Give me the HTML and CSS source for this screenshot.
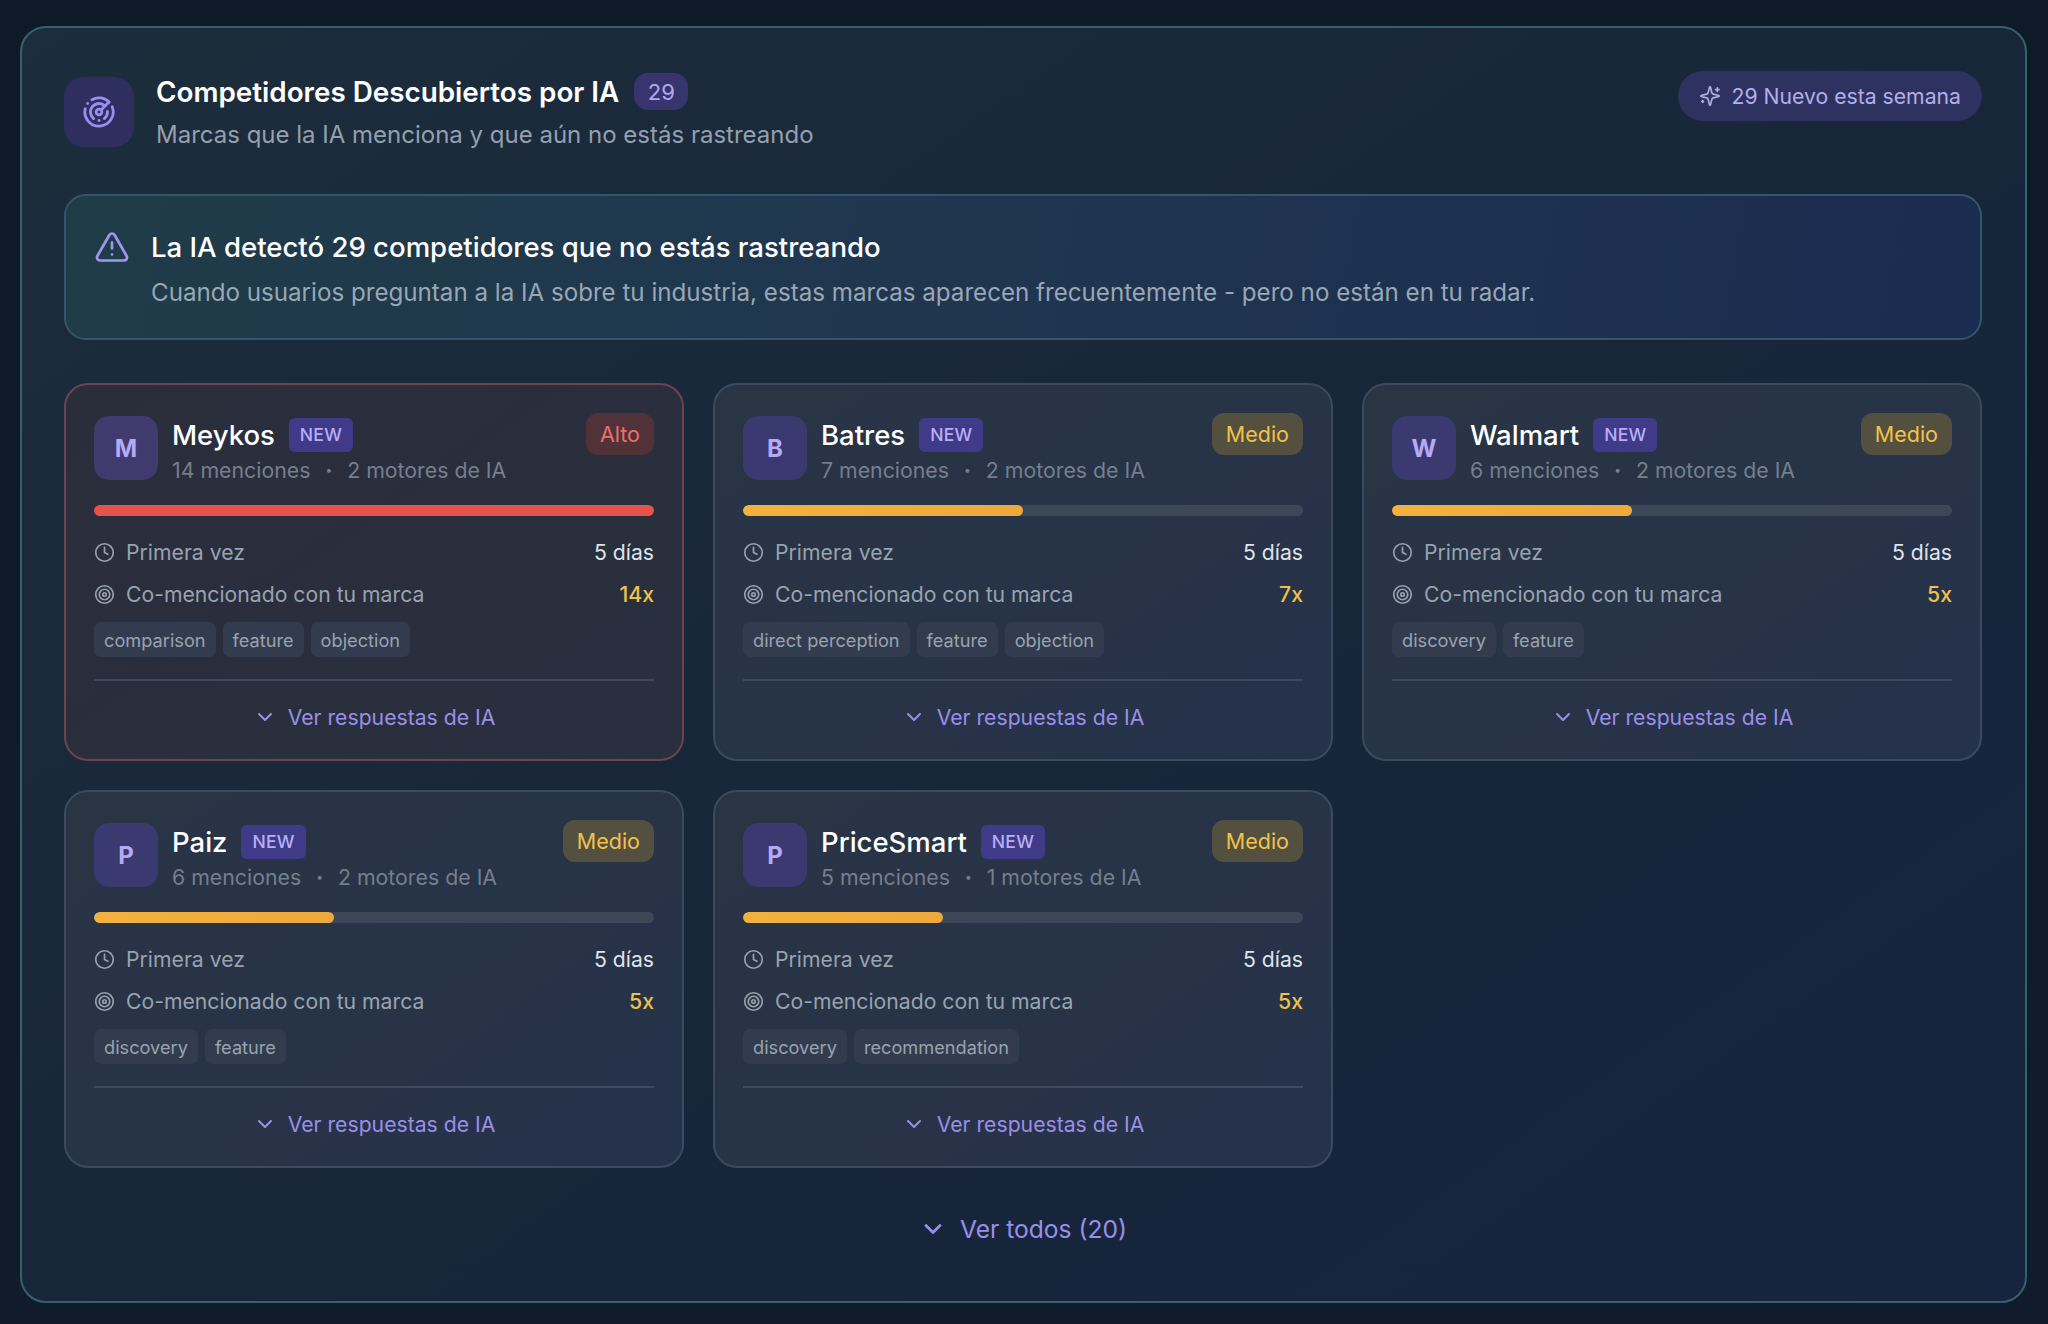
FILE: index.html
```html
<!DOCTYPE html>
<html lang="es">
<head>
<meta charset="utf-8">
<title>Competidores Descubiertos por IA</title>
<link rel="stylesheet" href="styles.css">
</head>
<body>
<svg class="defs" width="0" height="0" aria-hidden="true">
  <symbol id="i-radar" viewBox="0 0 24 24"><path d="M19.07 4.93A10 10 0 0 0 6.99 3.34"/><path d="M4 6h.01"/><path d="M2.29 9.62A10 10 0 1 0 21.31 8.35"/><path d="M16.24 7.76A6 6 0 1 0 8.23 16.67"/><path d="M12 18h.01"/><path d="M17.99 11.66A6 6 0 0 1 15.77 16.67"/><circle cx="12" cy="12" r="2"/><path d="m13.41 10.59 5.66-5.66"/></symbol>
  <symbol id="i-alert" viewBox="0 0 24 24"><path d="m21.73 18-8-14a2 2 0 0 0-3.48 0l-8 14A2 2 0 0 0 4 21h16a2 2 0 0 0 1.73-3"/><path d="M12 9v4"/><path d="M12 17h.01"/></symbol>
  <symbol id="i-spark" viewBox="0 0 24 24"><path d="M9.937 15.5A2 2 0 0 0 8.5 14.063l-6.135-1.582a.5.5 0 0 1 0-.962L8.5 9.936A2 2 0 0 0 9.937 8.5l1.582-6.135a.5.5 0 0 1 .963 0L14.063 8.5A2 2 0 0 0 15.5 9.937l6.135 1.581a.5.5 0 0 1 0 .964L15.5 14.063a2 2 0 0 0-1.437 1.437l-1.582 6.135a.5.5 0 0 1-.963 0z"/><path d="M20 3v4"/><path d="M22 5h-4"/><path d="M4 17v2"/><path d="M5 18H3"/></symbol>
  <symbol id="i-clock" viewBox="0 0 24 24"><circle cx="12" cy="12" r="10"/><path d="M12 6v6l4 2"/></symbol>
  <symbol id="i-target" viewBox="0 0 24 24"><circle cx="12" cy="12" r="10"/><circle cx="12" cy="12" r="6"/><circle cx="12" cy="12" r="2"/></symbol>
  <symbol id="i-chev" viewBox="0 0 24 24"><path d="m6 9 6 6 6-6"/></symbol>
</svg>

<main class="panel">
  <header class="head">
    <div class="head-icon"><svg class="ico ico-radar"><use href="#i-radar"/></svg></div>
    <div class="head-text">
      <div class="head-title"><h1>Competidores Descubiertos por IA</h1><span class="count">29</span></div>
      <p class="head-sub">Marcas que la IA menciona y que aún no estás rastreando</p>
    </div>
    <div class="week-pill"><svg class="ico ico-spark"><use href="#i-spark"/></svg>29 Nuevo esta semana</div>
  </header>

  <section class="alert">
    <svg class="ico ico-alert"><use href="#i-alert"/></svg>
    <div>
      <h2>La IA detectó 29 competidores que no estás rastreando</h2>
      <p>Cuando usuarios preguntan a la IA sobre tu industria, estas marcas aparecen frecuentemente - pero no están en tu radar.</p>
    </div>
  </section>

  <section class="grid">
    <article class="card card-high">
      <div class="card-top">
        <div class="avatar">M</div>
        <div class="card-id">
          <div class="name-row"><span class="name">Meykos</span><span class="new">NEW</span></div>
          <div class="meta"><span>14 menciones</span><span class="dot">•</span><span>2 motores de IA</span></div>
        </div>
        <span class="level level-high">Alto</span>
      </div>
      <div class="track"><div class="fill fill-high" style="width:100%"></div></div>
      <div class="row"><span class="row-l"><svg class="ico ico-row"><use href="#i-clock"/></svg>Primera vez</span><span class="row-v">5 días</span></div>
      <div class="row"><span class="row-l"><svg class="ico ico-row"><use href="#i-target"/></svg>Co-mencionado con tu marca</span><span class="row-x">14x</span></div>
      <div class="tags"><span class="tag">comparison</span><span class="tag">feature</span><span class="tag">objection</span></div>
      <div class="more"><svg class="ico ico-chev"><use href="#i-chev"/></svg>Ver respuestas de IA</div>
    </article>

    <article class="card">
      <div class="card-top">
        <div class="avatar">B</div>
        <div class="card-id">
          <div class="name-row"><span class="name">Batres</span><span class="new">NEW</span></div>
          <div class="meta"><span>7 menciones</span><span class="dot">•</span><span>2 motores de IA</span></div>
        </div>
        <span class="level">Medio</span>
      </div>
      <div class="track"><div class="fill" style="width:50%"></div></div>
      <div class="row"><span class="row-l"><svg class="ico ico-row"><use href="#i-clock"/></svg>Primera vez</span><span class="row-v">5 días</span></div>
      <div class="row"><span class="row-l"><svg class="ico ico-row"><use href="#i-target"/></svg>Co-mencionado con tu marca</span><span class="row-x">7x</span></div>
      <div class="tags"><span class="tag">direct perception</span><span class="tag">feature</span><span class="tag">objection</span></div>
      <div class="more"><svg class="ico ico-chev"><use href="#i-chev"/></svg>Ver respuestas de IA</div>
    </article>

    <article class="card">
      <div class="card-top">
        <div class="avatar">W</div>
        <div class="card-id">
          <div class="name-row"><span class="name">Walmart</span><span class="new">NEW</span></div>
          <div class="meta"><span>6 menciones</span><span class="dot">•</span><span>2 motores de IA</span></div>
        </div>
        <span class="level">Medio</span>
      </div>
      <div class="track"><div class="fill" style="width:42.8%"></div></div>
      <div class="row"><span class="row-l"><svg class="ico ico-row"><use href="#i-clock"/></svg>Primera vez</span><span class="row-v">5 días</span></div>
      <div class="row"><span class="row-l"><svg class="ico ico-row"><use href="#i-target"/></svg>Co-mencionado con tu marca</span><span class="row-x">5x</span></div>
      <div class="tags"><span class="tag">discovery</span><span class="tag">feature</span></div>
      <div class="more"><svg class="ico ico-chev"><use href="#i-chev"/></svg>Ver respuestas de IA</div>
    </article>

    <article class="card">
      <div class="card-top">
        <div class="avatar">P</div>
        <div class="card-id">
          <div class="name-row"><span class="name">Paiz</span><span class="new">NEW</span></div>
          <div class="meta"><span>6 menciones</span><span class="dot">•</span><span>2 motores de IA</span></div>
        </div>
        <span class="level">Medio</span>
      </div>
      <div class="track"><div class="fill" style="width:42.8%"></div></div>
      <div class="row"><span class="row-l"><svg class="ico ico-row"><use href="#i-clock"/></svg>Primera vez</span><span class="row-v">5 días</span></div>
      <div class="row"><span class="row-l"><svg class="ico ico-row"><use href="#i-target"/></svg>Co-mencionado con tu marca</span><span class="row-x">5x</span></div>
      <div class="tags"><span class="tag">discovery</span><span class="tag">feature</span></div>
      <div class="more"><svg class="ico ico-chev"><use href="#i-chev"/></svg>Ver respuestas de IA</div>
    </article>

    <article class="card">
      <div class="card-top">
        <div class="avatar">P</div>
        <div class="card-id">
          <div class="name-row"><span class="name">PriceSmart</span><span class="new">NEW</span></div>
          <div class="meta"><span>5 menciones</span><span class="dot">•</span><span>1 motores de IA</span></div>
        </div>
        <span class="level">Medio</span>
      </div>
      <div class="track"><div class="fill" style="width:35.7%"></div></div>
      <div class="row"><span class="row-l"><svg class="ico ico-row"><use href="#i-clock"/></svg>Primera vez</span><span class="row-v">5 días</span></div>
      <div class="row"><span class="row-l"><svg class="ico ico-row"><use href="#i-target"/></svg>Co-mencionado con tu marca</span><span class="row-x">5x</span></div>
      <div class="tags"><span class="tag">discovery</span><span class="tag">recommendation</span></div>
      <div class="more"><svg class="ico ico-chev"><use href="#i-chev"/></svg>Ver respuestas de IA</div>
    </article>
  </section>

  <div class="see-all"><svg class="ico ico-chev-lg"><use href="#i-chev"/></svg>Ver todos (20)</div>
</main>
</body>
</html>
```
FILE: styles.css
```css
* { box-sizing: border-box; }
html, body { height: 100%; }
body {
  margin: 0;
  padding: 26px 21px 21px 20px;
  background: linear-gradient(180deg, #0f1a28 0%, #101c2c 100%);
  font-family: Inter, "Liberation Sans", sans-serif;
  color: #fff;
  overflow: hidden;
}
.defs { position: absolute; }
.ico { fill: none; stroke: currentColor; stroke-width: 2; stroke-linecap: round; stroke-linejoin: round; flex: none; }

.panel {
  height: 1277px;
  padding: 43px 43px 0 42px;
  border: 2px solid #36616c;
  border-radius: 26px;
  background: linear-gradient(145deg, #1c2d3c 0%, #182639 50%, #16243f 100%);
}

.head { display: flex; align-items: flex-start; gap: 22px; height: 123px; padding-top: 2px; }
.head-icon {
  width: 70px; height: 70px; border-radius: 20px;
  background: #2f2f5f; color: #9b8cf0;
  display: flex; align-items: center; justify-content: center;
  margin-top: 4px;
}
.ico-radar { width: 34px; height: 34px; }
.head-text { flex: 1; }
.head-title { display: flex; align-items: center; gap: 15px; height: 37px; }
h1 { margin: 0; font-size: 27.8px; font-weight: 600; letter-spacing: 0; }
.count {
  width: 54px; height: 37px; border-radius: 14px;
  background: #38346e; color: #b3a8f2;
  display: flex; align-items: center; justify-content: center;
  font-size: 22px;
}
.head-sub { margin: 8px 0 0; font-size: 24px; line-height: 34px; color: #94a0ae; }
.week-pill {
  display: flex; align-items: center; gap: 11px;
  height: 50px; padding: 0 21px;
  margin-top: -2px;
  border-radius: 25px;
  background: #2e3260; color: #b3aee8;
  font-size: 21.2px;
}
.ico-spark { width: 22px; height: 22px; stroke-width: 1.8; }

.alert {
  display: flex; gap: 21px;
  height: 146px; padding: 33px 28px 0;
  border: 2px solid #33566a;
  border-radius: 22px;
  background: linear-gradient(100deg, #1f3c48 0%, #203650 45%, #1a2c50 100%);
}
.ico-alert { width: 36px; height: 36px; color: #a195ee; stroke-width: 1.8; }
.alert h2 { margin: 0; font-size: 27.55px; line-height: 36px; font-weight: 500; }
.alert p { margin: 10px 0 0; font-size: 24.15px; line-height: 36px; color: #9aa7b4; }

.grid {
  display: grid; grid-template-columns: repeat(3, 1fr); gap: 29px;
  margin-top: 43px;
}
.card {
  height: 378px; padding: 28px 28px 0;
  border: 2px solid #3b4a5e;
  border-radius: 24px;
  background: linear-gradient(145deg, #293444 0%, #26324a 100%);
}
.card-high {
  border-color: #6c4450;
  background: linear-gradient(145deg, #2b2d3a 0%, #292f3f 100%);
}
.card-top { display: flex; gap: 14px; height: 92px; }
.avatar {
  width: 64px; height: 64px; margin-top: 3px; border-radius: 15px;
  background: #3b3a70; color: #b6aaf6;
  display: flex; align-items: center; justify-content: center;
  font-size: 24px; font-weight: 700;
}
.card-high .avatar { background: #403a6e; }
.card-id { flex: 1; min-width: 0; }
.name-row { display: flex; align-items: center; gap: 14px; height: 43px; }
.name { font-size: 27.5px; font-weight: 500; }
.new {
  height: 34px; padding: 0 11px; border-radius: 6px;
  background: #3f3b88; color: #b9aef6;
  display: flex; align-items: center;
  font-size: 17.6px; font-weight: 500; letter-spacing: .2px;
}
.meta { display: flex; gap: 15px; margin-top: -1px; font-size: 21.3px; line-height: 30px; color: #747f8f; }
.dot { font-size: 12px; }
.level {
  align-self: flex-start; height: 42px; padding: 0 14px; border-radius: 12px;
  background: #54503f; color: #f1c24c;
  display: flex; align-items: center;
  font-size: 21.5px; font-weight: 400;
}
.level-high { background: #513238; color: #ea6f6a; }

.track { height: 11px; border-radius: 6px; background: #3c4858; overflow: hidden; }
.fill { height: 100%; border-radius: 6px; background: linear-gradient(90deg, #f2b23c, #eea83c); }
.fill-high { background: #e5534b; }

.row { display: flex; justify-content: space-between; align-items: center; font-size: 21.2px; height: 42px; }
.track + .row { margin-top: 15px; }
.row-l { display: flex; align-items: center; gap: 11px; color: #98a3b0; }
.ico-row { width: 21px; height: 21px; stroke-width: 1.9; }
.row-v { color: #dfe4ea; }
.row-x { color: #efc14c; font-weight: 500; }

.tags { display: flex; gap: 7px; margin-top: 7px; padding-bottom: 22px; border-bottom: 2px solid #3e4a5c; }
.tag {
  height: 35px; padding: 0 10px; border-radius: 7px;
  background: #333c4e; color: #98a3b0;
  display: flex; align-items: center;
  font-size: 18.2px;
}
.more {
  display: flex; align-items: center; justify-content: center; gap: 11px;
  height: 72px;
  color: #9a8fe8; font-size: 21.2px;
}
.ico-chev { width: 24px; height: 24px; }

.see-all {
  display: flex; align-items: center; justify-content: center; gap: 13px;
  margin-top: 43px; height: 36px;
  color: #9a8fe8; font-size: 24.6px;
}
.ico-chev-lg { width: 28px; height: 28px; stroke-width: 2.4; }
```
